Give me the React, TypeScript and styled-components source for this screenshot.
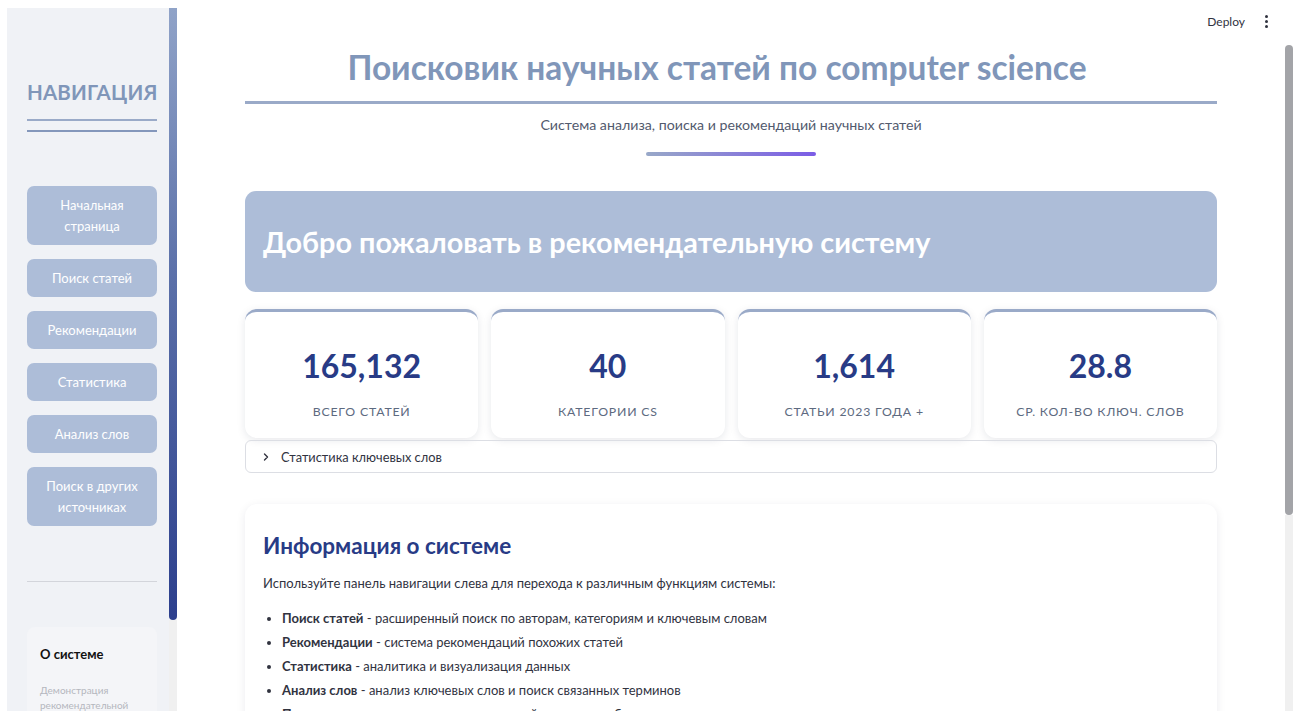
import React from "react";
import styled, { createGlobalStyle } from "styled-components";

const FONT = `"Lato", "Noto Sans", "Open Sans", sans-serif`;

const COLORS = {
  sidebarBg: "#f0f2f6",
  accent: "#8096b9",
  accentLine: "#9aaac8",
  button: "#adbdd8",
  dark: "#283b86",
  text: "#31333f",
  muted: "#5d6a80",
};

const GlobalStyle = createGlobalStyle`
  html, body {
    margin: 0;
    padding: 0;
    height: 100%;
    overflow: hidden;
    background: #ffffff;
  }
  body {
    font-family: ${FONT};
    color: ${COLORS.text};
  }
  * {
    box-sizing: border-box;
  }
`;

const Page = styled.div`
  display: flex;
  width: 100vw;
  height: 100vh;
  overflow: hidden;
`;

/* ---------- sidebar ---------- */

const SidebarSlot = styled.div`
  flex-shrink: 0;
  height: 100%;
  padding: 8px 0 0 7px;
`;

const Sidebar = styled.aside`
  display: flex;
  width: 170px;
  height: 100%;
  background: ${COLORS.sidebarBg};
`;

const SidebarContent = styled.div`
  flex: 1;
  display: flex;
  flex-direction: column;
  padding: 71px 12px 0 20px;
  overflow: hidden;
  > * {
    flex-shrink: 0;
  }
`;

const NavTitle = styled.h2`
  margin: 0;
  font-size: 20.5px;
  line-height: 26px;
  font-weight: 700;
  color: ${COLORS.accent};
  text-align: center;
  letter-spacing: 0.2px;
`;

const NavRule = styled.div<{ $gap: number; $color: string }>`
  height: 2px;
  margin-top: ${(p) => p.$gap}px;
  background: ${(p) => p.$color};
`;

const NavList = styled.nav`
  display: flex;
  flex-direction: column;
  gap: 14px;
  margin-top: 54px;
`;

const NavButton = styled.button`
  width: 100%;
  border: none;
  border-radius: 7px;
  background: ${COLORS.button};
  color: #ffffff;
  font-family: ${FONT};
  font-size: 13px;
  line-height: 21px;
  padding: 8.5px 10px;
  text-align: center;
  cursor: pointer;
`;

const SideDivider = styled.hr`
  border: none;
  height: 1px;
  background: #d3d5db;
  margin: 55px 0 0 0;
`;

const AboutBox = styled.div`
  margin-top: 45px;
  background: #f4f5f8;
  border-radius: 8px;
  padding: 18px 13px;
`;

const AboutTitle = styled.div`
  font-size: 13px;
  line-height: 18px;
  font-weight: 700;
  color: #111111;
`;

const AboutText = styled.div`
  margin-top: 20px;
  font-size: 10px;
  line-height: 15px;
  color: #b4b7be;
`;

const Rail = styled.div<{ $width: number; $top: number }>`
  flex-shrink: 0;
  display: flex;
  flex-direction: column;
  width: ${(p) => p.$width}px;
  height: 100%;
  padding-top: ${(p) => p.$top}px;
`;

const RailThumb = styled.div<{ $h: number; $bg: string; $radius: string }>`
  width: 8px;
  height: ${(p) => p.$h}px;
  flex-shrink: 0;
  background: ${(p) => p.$bg};
  border-radius: ${(p) => p.$radius};
`;

const RailTrack = styled.div`
  width: 8px;
  flex: 1;
  background: #f0f0f0;
`;

/* ---------- main ---------- */

const Main = styled.main`
  flex: 1;
  display: flex;
  flex-direction: column;
  min-width: 0;
  overflow: hidden;
  > * {
    flex-shrink: 0;
  }
`;

const TopBar = styled.header`
  display: flex;
  align-items: center;
  justify-content: flex-end;
  gap: 20px;
  height: 42px;
  padding-right: 17px;
  font-size: 12px;
  color: ${COLORS.text};
`;

const Kebab = styled.span`
  display: flex;
  flex-direction: column;
  gap: 2px;
  span {
    width: 3px;
    height: 3px;
    border-radius: 50%;
    background: ${COLORS.text};
  }
`;

const Content = styled.div`
  width: 972px;
  margin: 0 auto;
  display: flex;
  flex-direction: column;
  > * {
    flex-shrink: 0;
  }
`;

const Title = styled.h1`
  margin: 5px 0 0 0;
  padding: 0 28px 13px 0;
  border-bottom: 3px solid ${COLORS.accentLine};
  font-size: 33.5px;
  line-height: 41px;
  font-weight: 700;
  color: ${COLORS.accent};
  text-align: center;
`;

const Subtitle = styled.p`
  margin: 11px 0 0 0;
  font-size: 14.2px;
  line-height: 20px;
  color: #525a6e;
  text-align: center;
`;

const GradientBar = styled.div`
  width: 170px;
  height: 4px;
  margin: 17px auto 0 auto;
  border-radius: 2px;
  background: linear-gradient(90deg, #98a8c8 0%, #7b5ce6 100%);
`;

const Banner = styled.section`
  margin-top: 35px;
  height: 101px;
  display: flex;
  align-items: center;
  padding-left: 18px;
  border-radius: 11px;
  background: ${COLORS.button};
  h2 {
    margin: 0;
    font-size: 28.8px;
    font-weight: 700;
    color: #ffffff;
  }
`;

const StatsGrid = styled.div`
  margin-top: 17px;
  display: grid;
  grid-template-columns: repeat(4, 1fr);
  gap: 13px;
`;

const StatCard = styled.div`
  height: 129px;
  display: flex;
  flex-direction: column;
  align-items: center;
  padding-top: 34px;
  background: #ffffff;
  border-top: 3px solid ${COLORS.accentLine};
  border-radius: 12px;
  box-shadow: 0 2px 9px rgba(20, 30, 60, 0.1);
`;

const StatValue = styled.div`
  font-size: 32px;
  line-height: 40px;
  font-weight: 700;
  color: ${COLORS.dark};
`;

const StatLabel = styled.div`
  margin-top: 17px;
  font-size: 12.3px;
  line-height: 18px;
  letter-spacing: 0.8px;
  text-transform: uppercase;
  color: ${COLORS.muted};
`;

const Expander = styled.div`
  margin-top: 2px;
  height: 33px;
  display: flex;
  align-items: center;
  gap: 10px;
  padding-left: 15px;
  border: 1px solid #dcdee4;
  border-radius: 6px;
  font-size: 12.8px;
  color: ${COLORS.text};
`;

const InfoCard = styled.section`
  margin-top: 31px;
  padding: 27px 18px 20px 18px;
  background: #ffffff;
  border-radius: 12px;
  box-shadow: 0 2px 10px rgba(20, 30, 60, 0.08);
  h3 {
    margin: 0;
    font-size: 22.5px;
    line-height: 30px;
    font-weight: 700;
    color: ${COLORS.dark};
  }
  p {
    margin: 12px 0 0 0;
    font-size: 13px;
    line-height: 21px;
  }
`;

const FeatureList = styled.ul`
  margin: 12px 0 0 0;
  padding-left: 19px;
  li {
    font-size: 13px;
    line-height: 24px;
  }
  b {
    font-weight: 700;
  }
`;

const navItems = [
  "Начальная страница",
  "Поиск статей",
  "Рекомендации",
  "Статистика",
  "Анализ слов",
  "Поиск в других источниках",
];

const stats = [
  { value: "165,132", label: "Всего статей" },
  { value: "40", label: "Категории CS" },
  { value: "1,614", label: "Статьи 2023 года +" },
  { value: "28.8", label: "Ср. кол-во ключ. слов" },
];

const features = [
  ["Поиск статей", "расширенный поиск по авторам, категориям и ключевым словам"],
  ["Рекомендации", "система рекомендаций похожих статей"],
  ["Статистика", "аналитика и визуализация данных"],
  ["Анализ слов", "анализ ключевых слов и поиск связанных терминов"],
  ["Поиск в других источниках", "поиск статей во внешних базах данных"],
];

const App: React.FC = () => {
  return (
    <>
      <GlobalStyle />
      <Page>
        <SidebarSlot>
          <Sidebar>
            <SidebarContent>
              <NavTitle>НАВИГАЦИЯ</NavTitle>
              <NavRule $gap={14} $color={COLORS.accentLine} />
              <NavRule $gap={9} $color="#8497bb" />
              <NavList>
                {navItems.map((item) => (
                  <NavButton key={item}>{item}</NavButton>
                ))}
              </NavList>
              <SideDivider />
              <AboutBox>
                <AboutTitle>О системе</AboutTitle>
                <AboutText>
                  Демонстрация рекомендательной системы научных статей
                </AboutText>
              </AboutBox>
            </SidebarContent>
            <Rail $width={8} $top={0}>
              <RailThumb
                $h={612}
                $bg="linear-gradient(180deg, #90a3c8 0%, #5a6fa8 45%, #2c3f8d 100%)"
                $radius="0 0 4px 4px"
              />
              <RailTrack />
            </Rail>
          </Sidebar>
        </SidebarSlot>

        <Main>
          <TopBar>
            <span>Deploy</span>
            <Kebab>
              <span />
              <span />
              <span />
            </Kebab>
          </TopBar>
          <Content>
            <Title>Поисковик научных статей по computer science</Title>
            <Subtitle>Система анализа, поиска и рекомендаций научных статей</Subtitle>
            <GradientBar />

            <Banner>
              <h2>Добро пожаловать в рекомендательную систему</h2>
            </Banner>

            <StatsGrid>
              {stats.map((s) => (
                <StatCard key={s.label}>
                  <StatValue>{s.value}</StatValue>
                  <StatLabel>{s.label}</StatLabel>
                </StatCard>
              ))}
            </StatsGrid>

            <Expander>
              <svg width="10" height="10" viewBox="0 0 10 10" fill="none">
                <path d="M3.5 2 L6.5 5 L3.5 8" stroke="#31333f" strokeWidth="1.4" strokeLinecap="round" strokeLinejoin="round" />
              </svg>
              <span>Статистика ключевых слов</span>
            </Expander>

            <InfoCard>
              <h3>Информация о системе</h3>
              <p>Используйте панель навигации слева для перехода к различным функциям системы:</p>
              <FeatureList>
                {features.map(([name, desc]) => (
                  <li key={name}>
                    <b>{name}</b> - {desc}
                  </li>
                ))}
              </FeatureList>
            </InfoCard>
          </Content>
        </Main>

        <Rail $width={13} $top={45}>
          <RailThumb $h={470} $bg="#a3a4a8" $radius="4px" />
          <RailTrack />
        </Rail>
      </Page>
    </>
  );
};

export default App;
